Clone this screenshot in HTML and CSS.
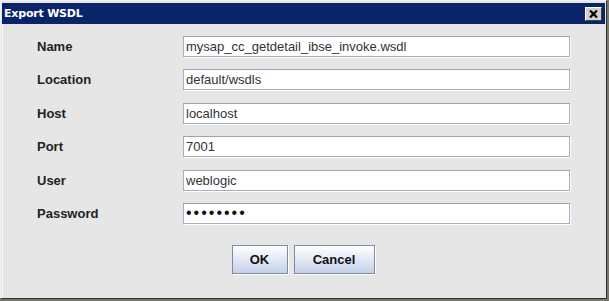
FILE: index.html
```html
<!DOCTYPE html>
<html lang="en">
<head>
    <meta charset="UTF-8">
    <title>Export WSDL</title>
    <link rel="stylesheet" href="styles.css">
</head>
<body>
    <div class="dialog">
        <div class="titlebar">
            <span class="title">Export WSDL</span>
            <button class="close-btn" aria-label="Close">
                <svg width="9" height="8" viewBox="0 0 9 8">
                    <path d="M1 0.5 L8 7.5 M8 0.5 L1 7.5" stroke="#000" stroke-width="2.2"/>
                </svg>
            </button>
        </div>

        <div class="content">
            <div class="form">
                <label for="name">Name</label>
                <input type="text" id="name" value="mysap_cc_getdetail_ibse_invoke.wsdl">

                <label for="location">Location</label>
                <input type="text" id="location" value="default/wsdls">

                <label for="host">Host</label>
                <input type="text" id="host" value="localhost">

                <label for="port">Port</label>
                <input type="text" id="port" value="7001">

                <label for="user">User</label>
                <input type="text" id="user" value="weblogic">

                <label for="password">Password</label>
                <input type="password" id="password" value="weblogic">
            </div>

            <div class="buttons">
                <button class="btn btn-ok">OK</button>
                <button class="btn btn-cancel">Cancel</button>
            </div>
        </div>
    </div>
</body>
</html>
```

FILE: styles.css
```css
body {
    margin: 0;
    background-color: #77776a;
    font-family: "Liberation Sans", Arial, sans-serif;
}
.dialog {
    width: 607px;
    height: 299px;
    box-sizing: border-box;
    background-color: #e6e6e6;
    border-top: 1px solid #f2f2f2;
    border-left: 1px solid #f2f2f2;
    border-right: 1px solid #303030;
    border-bottom: 1px solid #303030;
    padding: 2px 1px 0 1px;
    display: flex;
    flex-direction: column;
}
.titlebar {
    height: 21px;
    background-color: #0a246a;
    display: flex;
    align-items: center;
    justify-content: space-between;
    padding: 0 3px 0 2px;
}
.title {
    color: #fff;
    font-family: "DejaVu Sans", Verdana, sans-serif;
    font-weight: bold;
    font-size: 11px;
    letter-spacing: -0.2px;
}
.close-btn {
    width: 17px;
    height: 14px;
    padding: 0;
    background-color: #d4d0c8;
    border: 1px solid;
    border-color: #fff #404040 #404040 #fff;
    display: flex;
    align-items: center;
    justify-content: center;
}
.content {
    flex: 1;
    border-left: 1px solid #f8f8f8;
    padding: 12px 0 0 34px;
}
.form {
    display: grid;
    grid-template-columns: 146px 387px;
    grid-auto-rows: 21px;
    row-gap: 12.4px;
    align-items: center;
}
label {
    font-weight: bold;
    font-size: 13px;
    color: #222;
}
input {
    height: 21px;
    box-sizing: border-box;
    margin: 0;
    padding: 0 2px;
    border: 1px solid #a4aec0;
    border-top-color: #9aa4b6;
    box-shadow: 1px 1px 0 #fff;
    background-color: #fff;
    font-family: "Liberation Sans", Arial, sans-serif;
    font-size: 13px;
    color: #333;
    outline: none;
}
input[type="password"] {
    color: #111;
    font-size: 16px;
    letter-spacing: 2px;
}
.buttons {
    display: flex;
    justify-content: center;
    gap: 6px;
    margin-top: 21px;
    padding-right: 36px;
}
.btn {
    height: 29px;
    box-sizing: border-box;
    border: 1px solid #7d8aa4;
    box-shadow: 1px 1px 0 #fff;
    background: linear-gradient(#ffffff, #e4eaf6 45%, #c4d0ea);
    font-family: "Liberation Sans", Arial, sans-serif;
    font-weight: bold;
    font-size: 13px;
    color: #111;
    padding: 0;
}
.btn-ok {
    width: 56px;
}
.btn-cancel {
    width: 81px;
}
```
